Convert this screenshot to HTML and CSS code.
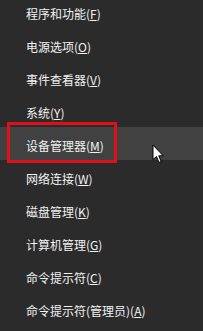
FILE: index.html
```html
<!DOCTYPE html>
<html lang="zh-CN">
<head>
    <meta charset="UTF-8">
    <meta name="viewport" content="width=device-width, initial-scale=1.0">
    <title>快速链接菜单</title>
    <link rel="stylesheet" href="styles.css">
</head>
<body>
    <ul class="quick-menu">
        <li class="menu-item">程序和功能(<u>F</u>)</li>
        <li class="menu-item">电源选项(<u>O</u>)</li>
        <li class="menu-item">事件查看器(<u>V</u>)</li>
        <li class="menu-item">系统(<u>Y</u>)</li>
        <li class="menu-item hover">
            设备管理器(<u>M</u>)
            <span class="mark-box"></span>
            <svg class="cursor" width="13" height="20" viewBox="0 0 13 20">
                <path d="M1 1 L1 15.5 L4.5 12.5 L7 18.5 L9.2 17.6 L6.8 11.8 L11.2 11.8 Z" fill="#fff" stroke="#000" stroke-width="1" stroke-linejoin="round"/>
            </svg>
        </li>
        <li class="menu-item">网络连接(<u>W</u>)</li>
        <li class="menu-item">磁盘管理(<u>K</u>)</li>
        <li class="menu-item">计算机管理(<u>G</u>)</li>
        <li class="menu-item">命令提示符(<u>C</u>)</li>
        <li class="menu-item">命令提示符(管理员)(<u>A</u>)</li>
    </ul>
</body>
</html>
```

FILE: styles.css
```css
* {
    margin: 0;
    padding: 0;
    box-sizing: border-box;
}

html, body {
    background: #2b2b2b;
    overflow: hidden;
}

body {
    width: 203px;
    height: 331px;
    font-family: "Microsoft YaHei", "Noto Sans CJK SC", sans-serif;
    color: #f2f2f2;
}

.quick-menu {
    list-style: none;
    margin-top: -5px;
}

.menu-item {
    position: relative;
    display: flex;
    align-items: center;
    height: 33px;
    padding: 3px 0 0 26px;
    font-size: 12px;
    white-space: nowrap;
}

.menu-item u {
    text-decoration-thickness: 1px;
    text-underline-offset: 1px;
}

.menu-item.hover {
    background: #414141;
}

.mark-box {
    position: absolute;
    left: 7px;
    top: -5px;
    width: 110px;
    height: 41px;
    border: 3px solid #e0101a;
}

.cursor {
    position: absolute;
    left: 152px;
    top: 17px;
}
```
